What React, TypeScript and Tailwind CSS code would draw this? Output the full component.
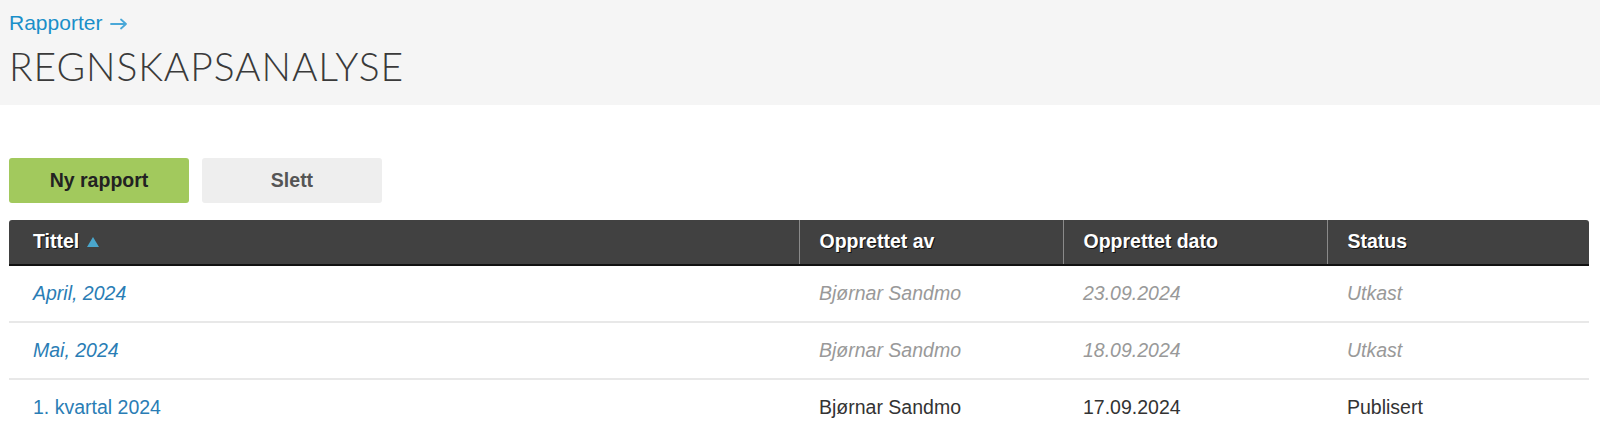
const rows = [
  { title: "April, 2024", author: "Bjørnar Sandmo", date: "23.09.2024", status: "Utkast", draft: true },
  { title: "Mai, 2024", author: "Bjørnar Sandmo", date: "18.09.2024", status: "Utkast", draft: true },
  { title: "1. kvartal 2024", author: "Bjørnar Sandmo", date: "17.09.2024", status: "Publisert", draft: false },
];

export default function App() {
  return (
    <div className="min-h-[433px] bg-white font-['Liberation_Sans',Arial,sans-serif]">
      <header className="h-[105px] bg-[#f5f5f5] px-[9px] pt-[9px]">
        <a href="#" className="flex items-center gap-[8px] text-[21px] leading-[28px] text-[#1a8fc9]">
          Rapporter
          <svg width="18" height="12" viewBox="0 0 18 12" fill="none" className="mt-[2px]">
            <path d="M1 6h15M11 1.5l5 4.5-5 4.5" stroke="#4aa8d8" strokeWidth="1.8" strokeLinecap="round" strokeLinejoin="round" />
          </svg>
        </a>
        <h1 className="mt-[6px] font-['Lato',sans-serif] text-[39px] font-light leading-[46px] tracking-[0.9px] text-[#3a3a3a]">
          REGNSKAPSANALYSE
        </h1>
      </header>

      <main className="px-[9px] pt-[53px]">
        <div className="flex gap-[13px]">
          <button className="h-[45px] w-[180px] rounded-[3px] bg-[#a2c95d] text-[19.5px] font-bold text-[#222]">
            Ny rapport
          </button>
          <button className="h-[45px] w-[180px] rounded-[3px] bg-[#eeeeee] text-[19.5px] font-bold text-[#555]">
            Slett
          </button>
        </div>

        <table className="mt-[17px] w-[1580px] table-fixed border-collapse text-[19.5px]">
          <colgroup>
            <col className="w-[790px]" />
            <col className="w-[264px]" />
            <col className="w-[264px]" />
            <col />
          </colgroup>
          <thead>
            <tr className="h-[45px] bg-[#414141] text-left text-white [text-shadow:1px_1px_0_#111]">
              <th className="rounded-tl-[3px] border-b-2 border-[#111] pl-[24px] font-bold">
                <span className="inline-flex items-center gap-[8px]">
                  Tittel
                  <svg width="12" height="10" viewBox="0 0 12 10">
                    <path d="M6 0L12 10H0Z" fill="#4aa6cc" />
                  </svg>
                </span>
              </th>
              <th className="border-b-2 border-l border-[#111] border-l-[#8a8a8a] pl-[20px] font-bold">Opprettet av</th>
              <th className="border-b-2 border-l border-[#111] border-l-[#8a8a8a] pl-[20px] font-bold">Opprettet dato</th>
              <th className="rounded-tr-[3px] border-b-2 border-l border-[#111] border-l-[#8a8a8a] pl-[20px] font-bold">Status</th>
            </tr>
          </thead>
          <tbody>
            {rows.map((r, i) => (
              <tr
                key={r.title}
                className={`h-[57px] ${i < rows.length - 1 ? "border-b-2 border-[#e8e8e8]" : ""}`}
              >
                <td className={`pl-[24px] text-[#2a7db5] ${r.draft ? "italic" : ""}`}>
                  <a href="#">{r.title}</a>
                </td>
                <td className={`pl-[20px] ${r.draft ? "italic text-[#999]" : "text-[#333]"}`}>{r.author}</td>
                <td className={`pl-[20px] ${r.draft ? "italic text-[#999]" : "text-[#333]"}`}>{r.date}</td>
                <td className={`pl-[20px] ${r.draft ? "italic text-[#999]" : "text-[#333]"}`}>{r.status}</td>
              </tr>
            ))}
          </tbody>
        </table>
      </main>
    </div>
  );
}
